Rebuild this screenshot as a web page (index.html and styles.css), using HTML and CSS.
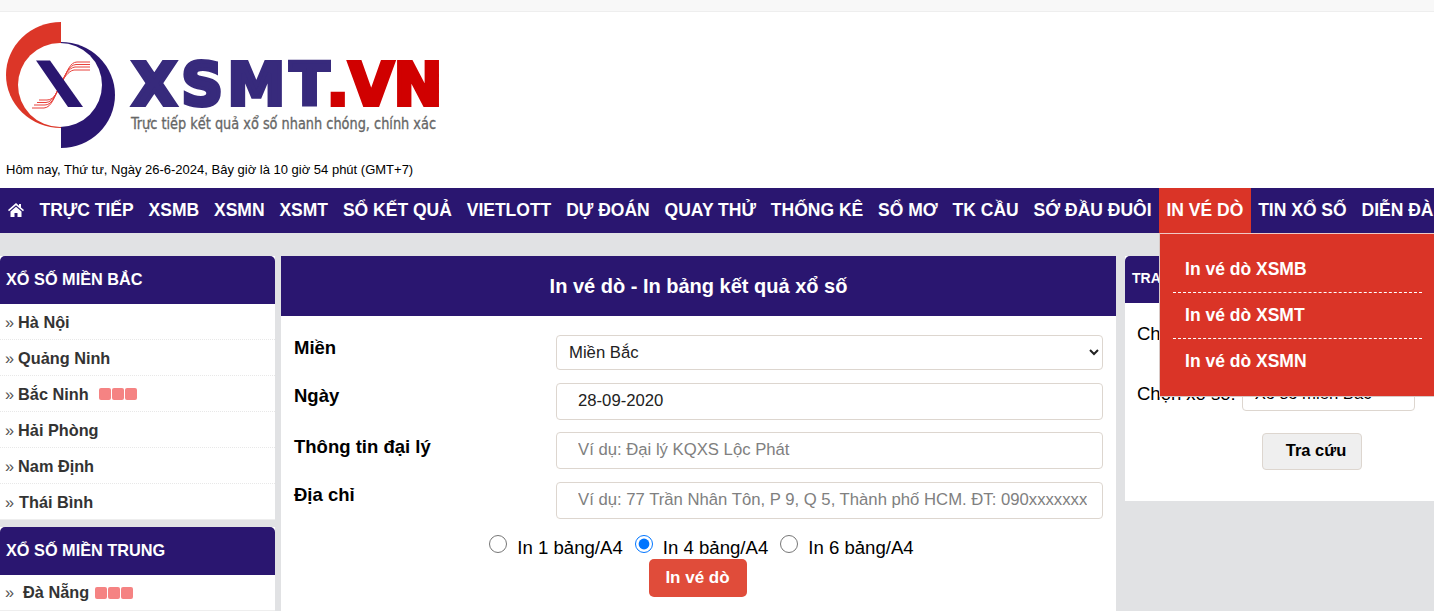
FILE: index.html
```html
<!DOCTYPE html>
<html lang="vi">
<head>
    <meta charset="UTF-8">
    <meta name="viewport" content="width=device-width, initial-scale=1.0">
    <title>In vé dò - XSMT.VN</title>
    <link rel="stylesheet" href="styles.css">
</head>
<body>
    <div class="top-strip"></div>

    <header class="site-header">
        <svg class="logo" width="445" height="148" viewBox="0 12 445 148" role="img" aria-label="XSMT.VN">
            <ellipse cx="61" cy="75" rx="55" ry="53" fill="#dc3628"/>
            <rect x="61" y="20" width="56" height="112" fill="#fff"/>
            <path d="M61 42 A54 53 0 0 1 61 148 Z" fill="#2a1670"/>
            <circle cx="60" cy="85" r="42" fill="#fff"/>
            <g fill="none" stroke="#e8403a" stroke-width="1">
                <path d="M90 62 H77 C70 62 67 72 63 80 C58 90 55 100 47 100 H39"/>
                <path d="M90 64.500 H76 C69 65 66 74 62 81 C57 91 54 102 46 102.500 H37"/>
                <path d="M90 67 H75 C68 68 65 76 61 83 C56 93 53 105 45 105 H34"/>
                <path d="M90 70 H74 C68 71 64 78 60 85 C55 95 52 107.500 44 108 H32"/>
            </g>
            <path d="M36 60.500 H50 L83 107 H68 Z" fill="#2a1670"/>
            <text class="logo-word" x="132" y="105"><tspan class="logo-xsmt">XSMT</tspan><tspan class="logo-vn" dx="-7">.VN</tspan></text>
            <text class="logo-tag" x="131" y="129" textLength="305" lengthAdjust="spacingAndGlyphs">Trực tiếp kết quả xổ số nhanh chóng, chính xác</text>
        </svg>
        <p class="today">Hôm nay, Thứ tư, Ngày 26-6-2024, Bây giờ là 10 giờ 54 phút (GMT+7)</p>
    </header>

    <nav class="main-nav">
        <a class="nav-item home" href="#">
            <svg width="16" height="14" viewBox="0 0 16 14" fill="#fff"><path d="M8 0 0 7l1 1.200 7-5.900 7 5.900L16 7l-3-2.500V1h-2v1.700z"/><path d="M2.500 8.500V14h4v-4h3v4h4V8.500L8 3.800z"/></svg>
        </a>
        <a class="nav-item" href="#">TRỰC TIẾP</a>
        <a class="nav-item" href="#">XSMB</a>
        <a class="nav-item" href="#">XSMN</a>
        <a class="nav-item" href="#">XSMT</a>
        <a class="nav-item" href="#">SỔ KẾT QUẢ</a>
        <a class="nav-item" href="#">VIETLOTT</a>
        <a class="nav-item" href="#">DỰ ĐOÁN</a>
        <a class="nav-item" href="#">QUAY THỬ</a>
        <a class="nav-item" href="#">THỐNG KÊ</a>
        <a class="nav-item" href="#">SỔ MƠ</a>
        <a class="nav-item" href="#">TK CẦU</a>
        <a class="nav-item" href="#">SỚ ĐẦU ĐUÔI</a>
        <div class="nav-drop">
            <a class="nav-item active" href="#">IN VÉ DÒ</a>
            <ul class="drop-menu">
                <li><a href="#">In vé dò XSMB</a></li>
                <li><a href="#">In vé dò XSMT</a></li>
                <li><a href="#">In vé dò XSMN</a></li>
            </ul>
        </div>
        <a class="nav-item" href="#">TIN XỔ SỐ</a>
        <a class="nav-item" href="#">DIỄN ĐÀN</a>
    </nav>

    <div class="content">
        <aside class="left-col">
            <section class="side-box">
                <h3 class="side-title">XỔ SỐ MIỀN BẮC</h3>
                <ul class="side-list">
                    <li><a href="#">Hà Nội</a></li>
                    <li><a href="#">Quảng Ninh</a></li>
                    <li><a href="#">Bắc Ninh</a><span class="live"><i></i><i></i><i></i></span></li>
                    <li><a href="#">Hải Phòng</a></li>
                    <li><a href="#">Nam Định</a></li>
                    <li><a href="#" class="wide">Thái Bình</a></li>
                </ul>
            </section>
            <section class="side-box">
                <h3 class="side-title">XỔ SỐ MIỀN TRUNG</h3>
                <ul class="side-list">
                    <li><a href="#" class="wider">Đà Nẵng</a><span class="live tight"><i></i><i></i><i></i></span></li>
                </ul>
            </section>
        </aside>

        <main class="main-col">
            <h1 class="main-title">In vé dò - In bảng kết quả xổ số</h1>
            <form class="print-form">
                <div class="form-row row-select">
                    <label>Miền</label>
                    <select class="field select-field"><option>Miền Bắc</option></select>
                </div>
                <div class="form-row">
                    <label>Ngày</label>
                    <input class="field" type="text" value="28-09-2020">
                </div>
                <div class="form-row row-agent">
                    <label>Thông tin đại lý</label>
                    <input class="field" type="text" placeholder="Ví dụ: Đại lý KQXS Lộc Phát">
                </div>
                <div class="form-row">
                    <label>Địa chỉ</label>
                    <input class="field" type="text" placeholder="Ví dụ: 77 Trần Nhân Tôn, P 9, Q 5, Thành phố HCM. ĐT: 090xxxxxxx">
                </div>
                <div class="radio-row">
                    <label><input type="radio" name="per-page"> In 1 bảng/A4</label>
                    <label><input type="radio" name="per-page" checked> In 4 bảng/A4</label>
                    <label><input type="radio" name="per-page"> In 6 bảng/A4</label>
                </div>
                <button class="print-btn" type="button">In vé dò</button>
            </form>
        </main>

        <aside class="right-col">
            <h3 class="right-title">TRA CỨU KẾT QUẢ</h3>
            <div class="right-body">
                <div class="right-row"><label>Chọn ngày:</label></div>
                <div class="right-row">
                    <label>Chọn xổ số:</label>
                    <select class="right-select"><option>Xổ số miền Bắc</option></select>
                </div>
                <button class="lookup-btn" type="button">Tra cứu</button>
            </div>
        </aside>
    </div>
</body>
</html>
```

FILE: styles.css
```css
* {
    margin: 0;
    padding: 0;
    box-sizing: border-box;
}

html, body {
    height: 100%;
    overflow: hidden;
}

body {
    display: flex;
    flex-direction: column;
    font-family: 'Liberation Sans', Arial, sans-serif;
    background: #e1e2e4;
    color: #000;
}

a {
    text-decoration: none;
    color: inherit;
}

ul {
    list-style: none;
}

.top-strip {
    height: 12px;
    background: #f8f8f8;
    border-bottom: 1px solid #eee;
    flex: none;
}

/* Header */
.site-header {
    background: #fff;
    height: 176px;
    flex: none;
}

.logo {
    display: block;
}

.logo-word {
    font-family: 'DejaVu Sans', sans-serif;
    font-weight: 700;
    font-size: 58px;
    stroke-width: 4px;
}

.logo-xsmt {
    fill: #372a7c;
    stroke: #372a7c;
    letter-spacing: 4.500px;
}

.logo-vn {
    fill: #d00000;
    stroke: #d00000;
    letter-spacing: 0;
}

.logo-tag {
    font-family: 'DejaVu Sans Condensed', 'DejaVu Sans', sans-serif;
    font-size: 15px;
    fill: #666;
    stroke: #666;
    stroke-width: 0.300px;
}

.today {
    font-size: 13px;
    line-height: 14px;
    padding: 3px 0 0 6px;
}

/* Navigation */
.main-nav {
    display: flex;
    height: 45px;
    flex: none;
    background: #2a1670;
    white-space: nowrap;
}

.nav-item {
    display: block;
    height: 45px;
    line-height: 44px;
    padding: 0 7.450px;
    color: #fff;
    font-size: 17.500px;
    font-weight: 700;
}

.nav-item.home {
    padding: 15px 8px 0;
}

.nav-item.home svg {
    display: block;
}

.nav-item.active {
    background: #da3427;
}

.nav-drop {
    position: relative;
}

.drop-menu {
    position: absolute;
    top: 45px;
    left: 0;
    width: 276px;
    height: 164px;
    padding: 13px 13px;
    background: #da3427;
    border-top: 1px solid #f0c9c5;
    border-bottom: 1px solid #d8c9c6;
    border-left: 1px solid #d8c9c6;
    z-index: 10;
}

.drop-menu li {
    height: 46px;
    line-height: 44px;
    padding-left: 12px;
    border-bottom: 1px dashed #fff;
    color: #fff;
    font-size: 17.500px;
    font-weight: 700;
}

.drop-menu li:last-child {
    border-bottom: none;
}

/* Three columns */
.content {
    flex: 1;
    display: grid;
    grid-template-columns: 275px 835px 320px;
    column-gap: 6px;
    padding-top: 23px;
    min-height: 0;
}

.left-col {
    display: flex;
    flex-direction: column;
    gap: 7px;
}

.side-box {
    background: #fff;
    flex: none;
}

.side-box:last-child {
    flex: 1;
}

.side-title {
    height: 48px;
    line-height: 47px;
    padding-left: 6px;
    background: #2a1670;
    border-radius: 5px 5px 0 0;
    color: #fff;
    font-size: 16.300px;
    font-weight: 700;
}

.side-list li {
    height: 36px;
    padding: 1px 0 0 5px;
    border-bottom: 1px dotted #e8e8e8;
    color: #333;
    font-size: 16.300px;
    font-weight: 700;
    display: flex;
    align-items: center;
}

.side-list li::before {
    content: "»";
    font-weight: 400;
    color: #555;
    margin-right: 4px;
}

.side-list li:last-child {
    border-bottom: 1px solid #eee;
}

.side-box:last-child .side-list li {
    padding-top: 0;
}

.side-list .wide {
    margin-left: 1px;
}

.side-list .wider {
    margin-left: 5px;
}

.live {
    display: flex;
    gap: 1px;
    margin-left: 10px;
}

.live.tight {
    margin-left: 6px;
}

.live i {
    width: 12px;
    height: 12px;
    background: #f58383;
    border-radius: 2px;
}

/* Main form */
.main-col {
    background: #fff;
}

.main-title {
    height: 60px;
    line-height: 60px;
    background: #2a1670;
    color: #fff;
    text-align: center;
    font-size: 20px;
    font-weight: 700;
}

.print-form {
    padding: 19px 13px 0;
}

.form-row {
    display: grid;
    grid-template-columns: 262px 547px;
    height: 37px;
    margin-bottom: 12px;
}

.form-row.row-select {
    height: 35px;
    margin-bottom: 13px;
}

.form-row.row-agent {
    margin-bottom: 13px;
}

.form-row label {
    font-size: 18.500px;
    font-weight: 700;
    line-height: 26px;
}

.form-row.row-agent label {
    line-height: 29px;
}

.field {
    width: 100%;
    height: 100%;
    padding: 0 15px 1px 21px;
    border: 1px solid #ddd6cf;
    border-radius: 4px;
    background: #fff;
    color: #222;
    font-family: inherit;
    font-size: 16.700px;
}

.select-field {
    padding: 0 8px;
}

.field::placeholder {
    color: #808080;
}

.radio-row {
    display: flex;
    justify-content: center;
    gap: 12px;
    height: 28px;
    padding: 2px 0 0 6px;
    font-size: 18.600px;
}

.radio-row label {
    display: flex;
    align-items: flex-start;
    gap: 10px;
    line-height: 30px;
}

.radio-row input {
    width: 18px;
    height: 18px;
    margin: 2px 0 0;
}

.print-btn {
    display: block;
    width: 98px;
    height: 38px;
    margin: 0 auto;
    position: relative;
    left: -1px;
    border: none;
    border-radius: 5px;
    background: #e04c3a;
    color: #fff;
    font-family: inherit;
    font-size: 17px;
    font-weight: 700;
}

/* Right lookup box */
.right-col {
    background: #fff;
    align-self: start;
    height: 245px;
    margin-left: 3px;
}

.right-title {
    height: 47px;
    line-height: 45px;
    padding-left: 7px;
    background: #2a1670;
    border-radius: 5px 5px 0 0;
    color: #fff;
    font-size: 14px;
    font-weight: 700;
}

.right-body {
    padding: 0 12px;
    font-size: 18.500px;
}

.right-row {
    height: 60px;
    display: flex;
    padding-top: 20px;
    line-height: 22px;
}

.right-select {
    width: 173px;
    height: 35px;
    margin-left: 6px;
    margin-top: -7px;
    padding-left: 8px;
    border: 1px solid #ddd6cf;
    border-radius: 4px;
    background: #fff;
    font-family: inherit;
    font-size: 16.700px;
}

.lookup-btn {
    display: block;
    width: 100px;
    height: 37px;
    margin: 10px 0 0 125px;
    padding: 0 0 2px 8px;
    border: 1px solid #ddd6cf;
    border-radius: 4px;
    background: #efefef;
    font-family: inherit;
    font-size: 16.500px;
    font-weight: 700;
}
```
